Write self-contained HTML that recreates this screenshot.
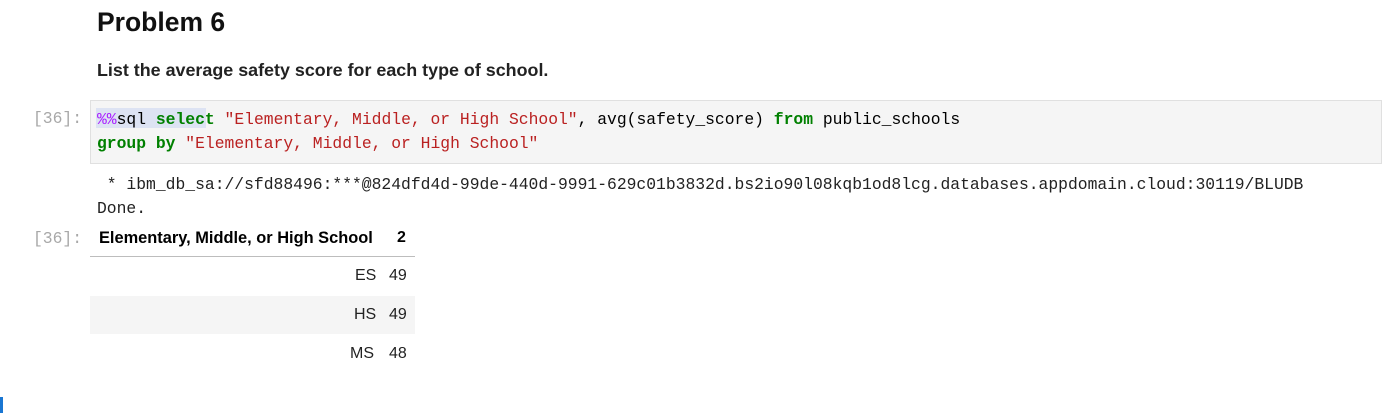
<!DOCTYPE html>
<html><head><style>
body{margin:0;width:1396px;height:413px;background:#fff;position:relative;overflow:hidden;font-family:"Liberation Sans",sans-serif;color:#000}
.a{position:absolute;white-space:pre}
.mono{font-family:"Liberation Mono",monospace;font-size:16.35px}
.p{color:#a8a8a8;font-family:"Liberation Mono",monospace;font-size:16.35px}
.k{color:#008000;font-weight:bold}
.s{color:#ba2121}
.m{color:#aa22ff}
</style></head><body>
<div class="a" style="left:97px;top:7px;font-size:26.5px;font-weight:bold;color:#111">Problem 6</div>
<div class="a" style="left:97px;top:60px;font-size:17.9px;font-weight:bold;color:#222">List the average safety score for each type of school.</div>
<div class="a p" style="left:33px;top:109px">[36]:</div>
<div class="a" style="left:90px;top:100px;width:1290px;height:62px;background:#f5f5f5;border:1px solid #e0e0e0"></div>
<div class="a" style="left:96px;top:108px;width:110px;height:20px;background:#dde3f3"></div>
<div class="a mono" style="left:97px;top:108px;line-height:24px"><span class="m">%%</span>sql <span class="k">select</span> <span class="s">"Elementary, Middle, or High School"</span>, avg(safety_score) <span class="k">from</span> public_schools
<span class="k">group by</span> <span class="s">"Elementary, Middle, or High School"</span></div>
<div class="a mono" style="left:97px;top:173px;line-height:24px;color:#222"> * ibm_db_sa://sfd88496:***@824dfd4d-99de-440d-9991-629c01b3832d.bs2io90l08kqb1od8lcg.databases.appdomain.cloud:30119/BLUDB
Done.</div>
<div class="a p" style="left:33px;top:229px">[36]:</div>
<div class="a" style="left:99px;top:229px;font-size:16.4px;font-weight:bold">Elementary, Middle, or High School</div>
<div class="a" style="left:397px;top:229px;font-size:16px;font-weight:bold">2</div>
<div class="a" style="left:90px;top:256px;width:325px;height:1px;background:#bdbdbd"></div>
<div class="a" style="left:90px;top:296px;width:325px;height:38px;background:#f5f5f5"></div>
<div class="a" style="left:355px;top:267px;font-size:16px;color:#222">ES</div>
<div class="a" style="left:389px;top:267px;font-size:16px;color:#222">49</div>
<div class="a" style="left:354px;top:306px;font-size:16px;color:#222">HS</div>
<div class="a" style="left:389px;top:306px;font-size:16px;color:#222">49</div>
<div class="a" style="left:350px;top:345px;font-size:16px;color:#222">MS</div>
<div class="a" style="left:389px;top:345px;font-size:16px;color:#222">48</div>
<div class="a" style="left:0;top:397px;width:3px;height:16px;background:#1976d2"></div>
</body></html>
